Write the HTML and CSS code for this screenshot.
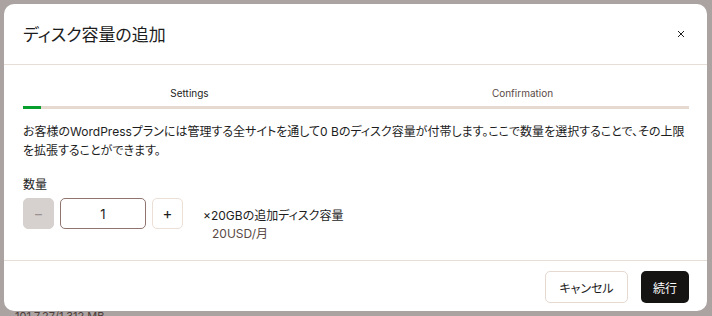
FILE: index.html
```html
<!DOCTYPE html>
<html lang="ja">
<head>
  <meta charset="UTF-8" />
  <title>ディスク容量の追加</title>
  <link rel="stylesheet" href="styles.css">
</head>
<body>
  <div class="modal">
    <div class="modal-header">
      <h1>ディスク容量の追加</h1>
      <button class="close-btn" aria-label="閉じる">
        <svg width="8" height="8" viewBox="0 0 8 8"><path d="M1 1L7 7M7 1L1 7" stroke="#1d1d1d" stroke-width="1" fill="none"/></svg>
      </button>
    </div>

    <div class="modal-body">
      <div class="steps">
        <div class="step active">Settings</div>
        <div class="step">Confirmation</div>
      </div>
      <div class="progress"><div class="progress-fill"></div></div>

      <p class="desc">お客様のWordPressプランには管理する全サイトを通して0 Bのディスク容量が付帯します。ここで数量を選択することで、その上限を拡張することができます。</p>

      <div class="qty-label">数量</div>
      <div class="qty-row">
        <button class="qty-btn disabled">−</button>
        <input class="qty-input" type="text" value="1" />
        <button class="qty-btn">+</button>
        <div class="qty-info">
          <div>×20GBの追加ディスク容量</div>
          <div class="price">20USD/月</div>
        </div>
      </div>
    </div>

    <div class="modal-footer">
      <button class="btn btn-outline">キャンセル</button>
      <button class="btn btn-dark">続行</button>
    </div>
  </div>
  <div class="behind">101 7.27/1.312 MB</div>
</body>
</html>
```

FILE: styles.css
```css
body {
  margin: 0;
  background: #aaa3a1;
  font-family: "Inter", "Noto Sans CJK JP", sans-serif;
  font-feature-settings: "palt";
  color: #1d1d1d;
  height: 316px;
  overflow: hidden;
  position: relative;
}

.modal {
  margin: 4px 0 0 4px;
  width: 703px;
  height: 307px;
  background: #fff;
  border-radius: 10px;
  display: flex;
  flex-direction: column;
  position: relative;
  z-index: 1;
}

/* ヘッダー */
.modal-header {
  height: 60px;
  flex-shrink: 0;
  border-bottom: 1px solid #e6ddd6;
  display: flex;
  align-items: center;
  justify-content: space-between;
  padding: 0 20px 0 19px;
}

.modal-header h1 {
  margin: 0 0 2px;
  font-size: 17px;
  font-weight: 400;
}

.close-btn {
  background: none;
  border: none;
  padding: 0;
  width: 12px;
  height: 12px;
  display: flex;
  align-items: center;
  justify-content: center;
  cursor: pointer;
}

.modal-body {
  flex-grow: 1;
  padding: 22px 18px 0 19px;
}

/* ステップ */
.steps {
  display: flex;
  font-size: 10px;
}

.step {
  flex: 1;
  text-align: center;
  color: #5a4a46;
}

.step.active {
  color: #1d1d1d;
}

.progress {
  margin-top: 7px;
  height: 3px;
  background: #e6dad0;
}

.progress-fill {
  width: 18px;
  height: 100%;
  background: #069e2d;
}

.desc {
  margin: 13px 0 0;
  font-size: 12px;
  line-height: 19px;
}

.qty-label {
  margin-top: 15px;
  font-size: 12px;
}

.qty-row {
  display: flex;
  align-items: flex-start;
  margin-top: 6px;
}

.qty-btn {
  width: 31px;
  height: 31px;
  border: 1px solid #ecdfd6;
  border-radius: 5px;
  background: #fff;
  color: #1d1d1d;
  font-size: 15px;
  font-family: inherit;
  padding: 0;
  cursor: pointer;
}

.qty-btn.disabled {
  background: #d6d1cf;
  border-color: #d6d1cf;
  color: #9a9290;
}

.qty-input {
  width: 86px;
  height: 31px;
  box-sizing: border-box;
  margin: 0 6px;
  border: 1px solid #8f7470;
  border-radius: 5px;
  text-align: center;
  font-size: 13px;
  font-family: inherit;
  color: #1d1d1d;
  outline: none;
}

.qty-info {
  margin: 9px 0 0 20px;
  font-size: 12px;
  line-height: 18px;
}

.qty-info .price {
  color: #5a4a46;
  padding-left: 9px;
}

/* フッター */
.modal-footer {
  height: 40px;
  flex-shrink: 0;
  border-top: 1px solid #e6ddd6;
  display: flex;
  justify-content: flex-end;
  align-items: flex-start;
  gap: 13px;
  padding: 10px 18px 0 0;
}

.btn {
  height: 32px;
  border-radius: 5px;
  font-size: 12px;
  font-family: inherit;
  font-feature-settings: "palt";
  cursor: pointer;
}

.btn-outline {
  width: 83px;
  background: #fff;
  border: 1px solid #e6d9d0;
  color: #1d1d1d;
}

.btn-dark {
  width: 48px;
  background: #161313;
  border: none;
  color: #fff;
}

.behind {
  position: absolute;
  left: 15px;
  top: 309px;
  font-size: 11px;
  color: #4d3c39;
}
```
